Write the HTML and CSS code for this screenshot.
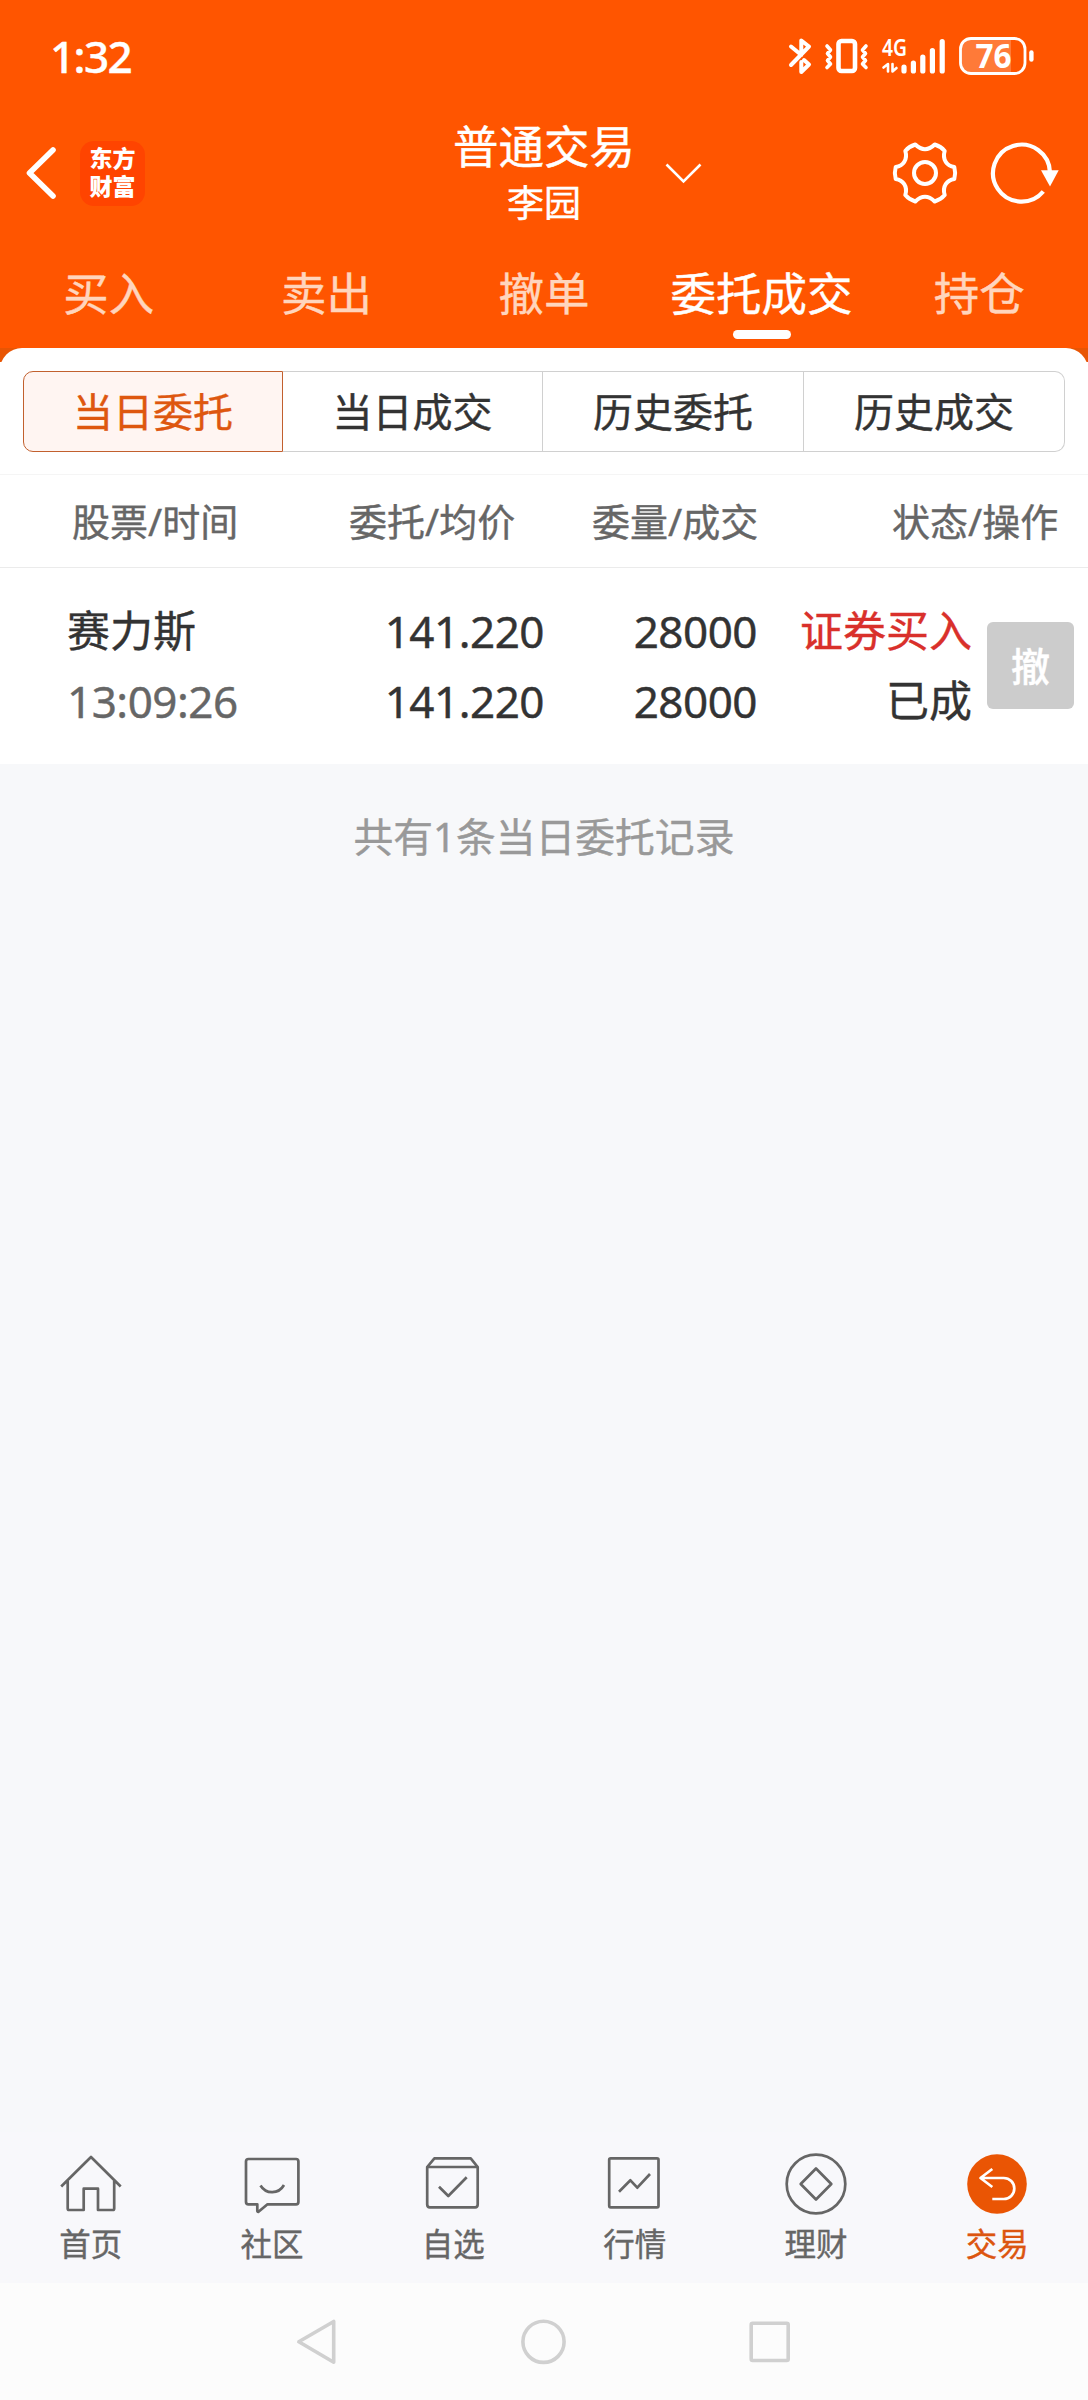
FILE: index.html
```html
<!DOCTYPE html>
<html lang="zh-CN">
<head>
<meta charset="utf-8">
<title>普通交易</title>
<link rel="stylesheet" href="styles.css">
</head>
<body>
<div class="app">
  <header class="top">
    <div class="status">
      <span class="clock">1:32</span>
      <svg class="status-icons" width="250" height="64" viewBox="787 24 250 64" fill="none" stroke="#fff" stroke-linecap="round" stroke-linejoin="round">
        <path stroke-width="4" d="M791 65 809 46.5 801.3 40.5V55L791 46.5M801.3 62V72L809 64.5 804 60"/>
        <rect x="838.5" y="41" width="16.5" height="30" rx="3" stroke-width="4.6"/>
        <path stroke-width="3.6" d="M827 46l3.500 4-3 3.500 3 3.500-3 3.500 3 3.500-3.500 3.500M866 46l-3.500 4 3 3.500-3 3.500 3 3.500-3 3.500 3.500 3.500"/>
        <text class="net" x="882" y="56" textLength="25" lengthAdjust="spacingAndGlyphs">4G</text>
        <path stroke-width="2.600" d="M888 71.500V64L883.500 67.500M892.500 64V71.500L896.500 68"/>
        <path stroke-width="5.200" d="M904 67V71M913.400 63V71M922.800 57V71M932.400 50.500V71M942.200 41.500V71"/>
        <path fill="#fff" fill-opacity=".22" stroke="none" d="M970 38H1011V73.500H970Q960 73.500 960 62V49Q960 38 970 38Z"/>
        <rect x="960.500" y="38.500" width="64.500" height="35" rx="10.500" stroke-width="2.800"/>
        <path stroke-width="4.400" d="M1031.400 52.500V59.500"/>
        <text class="level" x="975.500" y="68" textLength="36" lengthAdjust="spacingAndGlyphs">76</text>
      </svg>
    </div>
    <div class="titlebar">
      <div class="side">
        <svg width="34" height="58" viewBox="24 144 34 58" fill="none" stroke="#fff" stroke-width="5.600" stroke-linecap="round" stroke-linejoin="round"><path d="M53 150 29.500 173 53 196"/></svg>
        <div class="logo"><span>东方</span><span>财富</span></div>
      </div>
      <div class="account">
        <div class="account-text"><h1>普通交易</h1><p>李园</p></div>
        <svg class="caret" width="38" height="22" viewBox="663 161 38 22" fill="none" stroke="#fff" stroke-width="2.600"><path d="M665.500 163.500 682.500 180.300 699.500 163.500"/></svg>
      </div>
      <div class="side side-right">
        <svg width="68" height="68" viewBox="891 138.500 68 68" fill="none" stroke="#fff" stroke-width="4" stroke-linejoin="round"><path d="M915.300 144Q925 153.500 934.700 144 941 146 944.700 150.500C942 159 947 165.500 954.300 166.500Q956 172.500 954.300 178.500C947 179.500 942 186 944.700 194.500Q941 199 934.700 201 925 191.500 915.300 201 909 199 905.300 194.500C908 186 903 179.500 895.700 178.500Q894 172.500 895.700 166.500C903 165.500 908 159 905.300 150.500Q909 146 915.300 144Z"/><circle cx="925" cy="172.500" r="11"/></svg>
        <svg width="72" height="68" viewBox="989 138.500 72 68" fill="none" stroke="#fff" stroke-width="4.200"><path d="M1043.300 191A28.500 28.500 0 1 1 1050 172"/><path fill="#fff" stroke="none" d="M1041 169.800H1058.700L1050 186Z"/></svg>
      </div>
    </div>
    <nav class="tabs">
      <a>买入</a><a>卖出</a><a>撤单</a><a class="on">委托成交</a><a>持仓</a>
    </nav>
  </header>
  <div class="sheet-edge"><div class="sheet-curve"></div></div>
  <section class="sheet">
    <div class="segments">
      <a class="on">当日委托</a><a>当日成交</a><a>历史委托</a><a>历史成交</a>
    </div>
    <div class="cols">
      <span>股票/时间</span><span>委托/均价</span><span>委量/成交</span><span>状态/操作</span>
    </div>
    <div class="order">
      <div class="cell name"><span>赛力斯</span><span class="muted">13:09:26</span></div>
      <div class="cell"><span>141.220</span><span>141.220</span></div>
      <div class="cell"><span>28000</span><span>28000</span></div>
      <div class="cell state"><span class="buy">证券买入</span><span>已成</span></div>
      <button class="cancel">撤</button>
    </div>
  </section>
  <main class="rest"><p>共有1条当日委托记录</p></main>
  <nav class="bottom">
    <a><svg viewBox="55.300 2149 70 70"><path d="M60.500 2186.500 90.300 2157 120 2186.500M67 2181V2208.500Q67 2210 68.500 2210H83V2188.700H97.300V2210H112Q113.500 2210 113.500 2208.500V2181"/></svg><span>首页</span></a>
    <a><svg viewBox="236 2149 70 70"><path d="M247.500 2159H295Q297.400 2159 297.400 2161.500V2202Q297.400 2204.300 295 2204.300H266.500L257.500 2211.800Q256.300 2212 256.300 2210.500V2204.300H247.500Q245 2204.300 245 2202V2161.500Q245 2159 247.500 2159ZM259.500 2185.500C265 2194.500 277.500 2194.500 283 2185"/></svg><span>社区</span></a>
    <a><svg viewBox="417.300 2149 70 70"><path d="M426.500 2167H477V2204.500Q477 2207.300 474.500 2207.300H429Q426.500 2207.300 426.500 2204.500ZM426.500 2167 433.700 2158.300H470L477 2167M438.300 2186.700 447.600 2196 466 2177.300"/></svg><span>自选</span></a>
    <a><svg viewBox="599 2149 70 70"><rect x="608.200" y="2158.300" width="49.300" height="49" rx="1.500"/><path d="M618 2191.700 629.400 2180.300 636.300 2187.700 649 2174"/></svg><span>行情</span></a>
    <a><svg viewBox="780 2149 70 70"><circle cx="815" cy="2184" r="29.300"/><path d="M815 2168.500 830.300 2184 815 2199.500 799.700 2184Z"/></svg><span>理财</span></a>
    <a class="on"><svg viewBox="962 2149 70 70"><circle cx="997" cy="2184" r="29.800" fill="#ea5504" stroke="none"/><path stroke="#fff" d="M992.300 2169 980.500 2178 992.300 2187M980.500 2178H1003.800A10.500 10.500 0 0 1 1003.800 2199H992.300"/></svg><span>交易</span></a>
  </nav>
  <footer class="system">
    <svg width="500" height="50" viewBox="294 2316.500 500 50" fill="none" stroke="#d0d0d0" stroke-width="3.600" stroke-linejoin="round"><path d="M298.800 2341.300 333.700 2321V2361.800Z"/><circle cx="543.500" cy="2341.300" r="20.600"/><rect x="751.200" y="2322.700" width="37" height="37.300" rx="1.500"/></svg>
  </footer>
</div>
</body>
</html>
```

FILE: styles.css
```css
* { box-sizing: border-box; margin: 0; padding: 0; }
body {
  width: 1088px;
  font-family: "Noto Sans", "Noto Sans CJK SC", sans-serif;
  color: #333;
  background: #f7f8fa;
  -webkit-text-stroke: 0.4px currentColor;
}
svg { display: block; flex: none; -webkit-text-stroke: 0; }
.app { display: flex; flex-direction: column; height: 2400px; }

.top { height: 348px; background: #ff5500; color: #fff; display: flex; flex-direction: column; }
.status { height: 112px; padding: 0 51px 0 50px; display: flex; align-items: center; justify-content: space-between; }
.clock { font-size: 44px; font-weight: 500; letter-spacing: -1.6px; line-height: 60px; }
.net { font-size: 24px; font-weight: 600; fill: #fff; stroke: none; }
.level { font-size: 34px; font-weight: 700; fill: #fff; stroke: none; }

.titlebar { height: 122px; padding: 0 27px 0 24px; display: grid; grid-template-columns: 250px 1fr 250px; align-items: center; }
.side { display: flex; align-items: center; gap: 22px; }
.side-right { justify-content: flex-end; gap: 30px; }
.logo {
  width: 65px; height: 65px; border-radius: 14px; background: #ff4400;
  display: flex; flex-direction: column; align-items: center; justify-content: center;
  font-size: 23px; line-height: 28px; font-weight: 900; padding-bottom: 2px;
  -webkit-text-stroke: 0;
}
.account { display: flex; align-items: center; justify-content: center; gap: 29px; padding-left: 70px; }
.account-text { text-align: center; padding-bottom: 2px; }
.account h1 { font-size: 45.500px; font-weight: 400; line-height: 62px; }
.account p { font-size: 37px; line-height: 52px; }

.tabs { flex: 1; display: grid; grid-template-columns: repeat(5, 1fr); padding-top: 25px; }
.tabs a { display: flex; flex-direction: column; align-items: center; font-size: 45.500px; line-height: 68px; color: #ffd5bd; }
.tabs .on { color: #fff; }
.tabs .on::after { content: ""; width: 58px; height: 9px; border-radius: 5px; background: #fff; margin-top: 3px; }

.sheet-edge { height: 14px; background: #e85504; overflow: hidden; }
.sheet-curve { height: 40px; background: #fff; border-radius: 22px 22px 0 0; }
.sheet { background: #fff; padding-top: 9px; }
.segments { display: grid; grid-template-columns: 260px 260px 261px 261px; height: 81px; margin: 0 23px 22px; }
.segments a {
  display: flex; align-items: center; justify-content: center; padding-bottom: 3px;
  font-size: 40px; border: 1px solid #d0d0d0; border-left: 0;
}
.segments a:last-child { border-radius: 0 10px 10px 0; }
.segments .on { color: #de570f; background: #fff5f2; border: 1px solid #c2602e; border-radius: 10px 0 0 10px; }

.cols {
  height: 94px; border-top: 1px solid #f5f5f5; border-bottom: 1px solid #ebebeb;
  display: grid; grid-template-columns: 277px 243px 300px 1fr; align-items: center;
  padding: 0 0 3px 72px; font-size: 38px; color: #666;
}
.order { height: 196px; display: grid; grid-template-columns: 237px 240px 213px 215px 87px; align-items: center; padding-left: 67px; }
.cell { display: flex; flex-direction: column; align-items: flex-end; font-size: 44px; line-height: 70px; letter-spacing: -0.5px; }
.cell span { white-space: nowrap; }
.name { align-items: flex-start; }
.name span:first-child, .state { font-size: 43px; letter-spacing: 0; }
.muted { color: #666; }
.buy { color: #d9302b; }
.cancel {
  width: 87px; height: 87px; margin: 0 0 2px 15px; padding-bottom: 3px; border: 0; border-radius: 6px;
  background: #ccc; color: #fff; font: 500 39px/84px "Noto Sans CJK SC", sans-serif;
}

.rest { flex: 1; padding-top: 43px; text-align: center; font-size: 39.800px; line-height: 60px; color: #999; }

.bottom { height: 151px; background: #f8f8fb; display: grid; grid-template-columns: repeat(6, 1fr); }
.bottom a { display: flex; flex-direction: column; align-items: center; padding-top: 17px; font-size: 31.500px; line-height: 50px; color: #666; }
.bottom svg { width: 70px; height: 70px; fill: none; stroke: #666; stroke-width: 2.700; stroke-linejoin: round; }
.bottom .on { color: #dc5510; }
.system { height: 117px; background: #fcfcfc; display: flex; justify-content: center; align-items: center; }
```
